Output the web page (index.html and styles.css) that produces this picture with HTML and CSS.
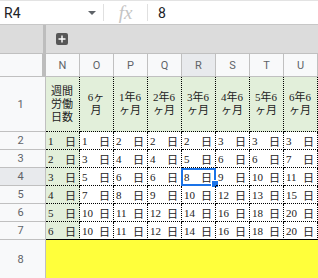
FILE: index.html
```html
<!DOCTYPE html>
<html lang="ja">
<head>
  <meta charset="UTF-8">
  <title>年次有給休暇 比例付与</title>
  <link rel="stylesheet" href="styles.css">
</head>
<body>
  <div class="formula-bar">
    <div class="name-box"><span>R4</span><span class="caret"></span></div>
    <span class="sep"></span>
    <div class="fx">fx</div>
    <span class="sep"></span>
    <div class="value">8</div>
  </div>

  <div class="group-strip">
    <div class="strip-corner"></div>
    <div class="strip-main">
      <span class="group-btn">
        <svg width="12" height="12" viewBox="0 0 12 12"><path d="M6 2.5v7M2.5 6h7" stroke="#fff" stroke-width="1.4"/></svg>
      </span>
    </div>
  </div>

  <div class="sheet">
    <div class="corner"></div>
    <div class="col-head">N</div>
    <div class="col-head">O</div>
    <div class="col-head">P</div>
    <div class="col-head">Q</div>
    <div class="col-head active">R</div>
    <div class="col-head">S</div>
    <div class="col-head">T</div>
    <div class="col-head">U</div>

    <div class="row-head">1</div>
    <div class="cell head">週間<br>労働<br>日数</div>
    <div class="cell head">6ヶ<br>月</div>
    <div class="cell head">1年6<br>ヶ月</div>
    <div class="cell head">2年6<br>ヶ月</div>
    <div class="cell head">3年6<br>ヶ月</div>
    <div class="cell head">4年6<br>ヶ月</div>
    <div class="cell head">5年6<br>ヶ月</div>
    <div class="cell head">6年6<br>ヶ月</div>

    <div class="row-head">2</div>
    <div class="cell days"><span>1</span><span>日</span></div>
    <div class="cell"><span>1</span><span>日</span></div>
    <div class="cell"><span>2</span><span>日</span></div>
    <div class="cell"><span>2</span><span>日</span></div>
    <div class="cell"><span>2</span><span>日</span></div>
    <div class="cell"><span>3</span><span>日</span></div>
    <div class="cell"><span>3</span><span>日</span></div>
    <div class="cell"><span>3</span><span>日</span></div>

    <div class="row-head">3</div>
    <div class="cell days"><span>2</span><span>日</span></div>
    <div class="cell"><span>3</span><span>日</span></div>
    <div class="cell"><span>4</span><span>日</span></div>
    <div class="cell"><span>4</span><span>日</span></div>
    <div class="cell"><span>5</span><span>日</span></div>
    <div class="cell"><span>6</span><span>日</span></div>
    <div class="cell"><span>6</span><span>日</span></div>
    <div class="cell"><span>7</span><span>日</span></div>

    <div class="row-head active">4</div>
    <div class="cell days"><span>3</span><span>日</span></div>
    <div class="cell"><span>5</span><span>日</span></div>
    <div class="cell"><span>6</span><span>日</span></div>
    <div class="cell"><span>6</span><span>日</span></div>
    <div class="cell selected"><span>8</span><span>日</span><i class="sel-box"><i class="sel-handle"></i></i></div>
    <div class="cell"><span>9</span><span>日</span></div>
    <div class="cell"><span>10</span><span>日</span></div>
    <div class="cell"><span>11</span><span>日</span></div>

    <div class="row-head">5</div>
    <div class="cell days"><span>4</span><span>日</span></div>
    <div class="cell"><span>7</span><span>日</span></div>
    <div class="cell"><span>8</span><span>日</span></div>
    <div class="cell"><span>9</span><span>日</span></div>
    <div class="cell"><span>10</span><span>日</span></div>
    <div class="cell"><span>12</span><span>日</span></div>
    <div class="cell"><span>13</span><span>日</span></div>
    <div class="cell"><span>15</span><span>日</span></div>

    <div class="row-head">6</div>
    <div class="cell days"><span>5</span><span>日</span></div>
    <div class="cell"><span>10</span><span>日</span></div>
    <div class="cell"><span>11</span><span>日</span></div>
    <div class="cell"><span>12</span><span>日</span></div>
    <div class="cell"><span>14</span><span>日</span></div>
    <div class="cell"><span>16</span><span>日</span></div>
    <div class="cell"><span>18</span><span>日</span></div>
    <div class="cell"><span>20</span><span>日</span></div>

    <div class="row-head">7</div>
    <div class="cell days last"><span>6</span><span>日</span></div>
    <div class="cell last"><span>10</span><span>日</span></div>
    <div class="cell last"><span>11</span><span>日</span></div>
    <div class="cell last"><span>12</span><span>日</span></div>
    <div class="cell last"><span>14</span><span>日</span></div>
    <div class="cell last"><span>16</span><span>日</span></div>
    <div class="cell last"><span>18</span><span>日</span></div>
    <div class="cell last"><span>20</span><span>日</span></div>

    <div class="row-head">8</div>
    <div class="yellow-row"></div>
  </div>
</body>
</html>
```

FILE: styles.css
```css
* { box-sizing: border-box; }
body {
  margin: 0; padding: 0;
  background: #fff;
  font-family: Roboto, Arial, sans-serif;
  overflow: hidden;
}

/* formula bar */
.formula-bar {
  display: flex; align-items: center;
  height: 25px;
  border-top: 1px solid #e3e3e3;
  border-bottom: 1px solid #c7c7c7;
  font-size: 14px; color: #202124;
}
.name-box {
  width: 103px; display: flex; align-items: center; justify-content: space-between;
  padding: 0 7px 0 4px;
}
.caret {
  width: 0; height: 0;
  border-left: 4px solid transparent; border-right: 4px solid transparent;
  border-top: 4px solid #5f6368;
}
.sep { width: 1px; height: 17px; background: #e0e0e0; }
.fx {
  width: 43px; text-align: center;
  font-family: "Liberation Serif", serif; font-style: italic;
  font-size: 19px; color: #c4c4c4;
}
.value { padding-left: 10px; }

/* column group strip */
.group-strip { display: flex; height: 28px; background: #dcdcdc; }
.strip-corner { width: 46px; border-right: 3px solid #bdbdbd; }
.strip-main { flex: 1; padding: 8px 0 0 10px; }
.group-btn {
  display: block; width: 12px; height: 12px;
  background: #575757; border-radius: 2px;
}
.group-btn svg { display: block; }

/* grid */
.sheet {
  display: grid;
  grid-template-columns: 46px repeat(8, 34px);
  grid-template-rows: 24px 55px repeat(6, 18px) 39px;
}
.corner {
  background: #f8f9fa;
  border-top: 1px solid #c0c0c0;
  border-right: 4px solid #bdbdbd;
  border-bottom: 1px solid #c0c0c0;
}
.col-head {
  display: flex; align-items: center; justify-content: center;
  background: #f8f9fa; color: #5f6368; font-size: 11px;
  border-top: 1px solid #c0c0c0;
  border-right: 1px solid #c0c0c0;
  border-bottom: 1px solid #c0c0c0;
}
.row-head {
  display: flex; align-items: center; justify-content: center;
  padding-right: 4px;
  background: #f8f9fa; color: #5f6368; font-size: 11px;
  border-right: 1px solid #c0c0c0;
  border-bottom: 1px solid #c0c0c0;
}
.col-head.active, .row-head.active { background: #e8eaed; }

.cell {
  position: relative;
  display: flex; align-items: center; justify-content: space-between;
  padding: 0 3px 0 2px;
  font-family: "Liberation Serif", "Noto Sans CJK JP", serif;
  font-size: 11px; color: #222;
  border-right: 1px dotted #000;
  border-bottom: 1px dotted #000;
}
.cell.head {
  justify-content: center; text-align: center;
  line-height: 13px; background: #e2efda;
}
.cell.days { background: #e2efda; }
.cell.last { border-bottom: 1px solid #000; }

.sel-box {
  position: absolute; top: 0; left: -1px;
  width: 35px; height: 18px;
  border: 2px solid #1a73e8;
}
.sel-handle {
  position: absolute; right: -5px; bottom: -4px;
  width: 8px; height: 8px;
  background: #1a73e8; border: 1px solid #fff;
}

.yellow-row { grid-column: 2 / 10; background: #ffff3b; }
```
